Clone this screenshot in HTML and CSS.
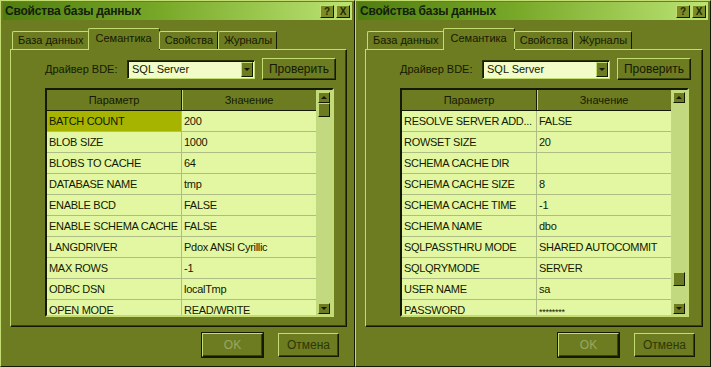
FILE: index.html
```html
<!DOCTYPE html>
<html lang="ru">
<head>
  <meta charset="UTF-8" />
  <title>Свойства базы данных</title>
  <link rel="stylesheet" href="styles.css">
</head>
<body>
  <div class="desktop">

    <!-- Left dialog -->
    <div class="window">
      <div class="titlebar">
        <span class="title">Свойства базы данных</span>
        <span class="cap-btn">?</span>
        <span class="cap-btn close">X</span>
      </div>

      <div class="tabs">
        <div class="tab">База данных</div>
        <div class="tab active">Семантика</div>
        <div class="tab">Свойства</div>
        <div class="tab">Журналы</div>
      </div>

      <div class="panel">
        <div class="driver-row">
          <span class="label">Драйвер BDE:</span>
          <div class="combo">
            <span class="combo-text">SQL Server</span>
            <span class="combo-btn"><span class="arrow-down"></span></span>
          </div>
          <button class="btn check-btn">Проверить</button>
        </div>

        <div class="grid">
          <table class="params">
            <tr><th>Параметр</th><th>Значение</th></tr>
            <tr><td class="selected">BATCH COUNT</td><td>200</td></tr>
            <tr><td>BLOB SIZE</td><td>1000</td></tr>
            <tr><td>BLOBS TO CACHE</td><td>64</td></tr>
            <tr><td>DATABASE NAME</td><td>tmp</td></tr>
            <tr><td>ENABLE BCD</td><td>FALSE</td></tr>
            <tr><td>ENABLE SCHEMA CACHE</td><td>FALSE</td></tr>
            <tr><td>LANGDRIVER</td><td>Pdox ANSI Cyrillic</td></tr>
            <tr><td>MAX ROWS</td><td>-1</td></tr>
            <tr><td>ODBC DSN</td><td>localTmp</td></tr>
            <tr><td>OPEN MODE</td><td>READ/WRITE</td></tr>
          </table>
          <div class="scrollbar">
            <span class="sb-btn"><span class="arrow-up"></span></span>
            <div class="sb-track">
              <span class="sb-thumb"></span>
            </div>
            <span class="sb-btn"><span class="arrow-down"></span></span>
          </div>
        </div>
      </div>

      <div class="footer">
        <button class="btn default">OK</button>
        <button class="btn">Отмена</button>
      </div>
    </div>

    <!-- Right dialog -->
    <div class="window">
      <div class="titlebar">
        <span class="title">Свойства базы данных</span>
        <span class="cap-btn">?</span>
        <span class="cap-btn close">X</span>
      </div>

      <div class="tabs">
        <div class="tab">База данных</div>
        <div class="tab active">Семантика</div>
        <div class="tab">Свойства</div>
        <div class="tab">Журналы</div>
      </div>

      <div class="panel">
        <div class="driver-row">
          <span class="label">Драйвер BDE:</span>
          <div class="combo">
            <span class="combo-text">SQL Server</span>
            <span class="combo-btn"><span class="arrow-down"></span></span>
          </div>
          <button class="btn check-btn">Проверить</button>
        </div>

        <div class="grid">
          <table class="params">
            <tr><th>Параметр</th><th>Значение</th></tr>
            <tr><td>RESOLVE SERVER ADD...</td><td>FALSE</td></tr>
            <tr><td>ROWSET SIZE</td><td>20</td></tr>
            <tr><td>SCHEMA CACHE DIR</td><td></td></tr>
            <tr><td>SCHEMA CACHE SIZE</td><td>8</td></tr>
            <tr><td>SCHEMA CACHE TIME</td><td>-1</td></tr>
            <tr><td>SCHEMA NAME</td><td>dbo</td></tr>
            <tr><td>SQLPASSTHRU MODE</td><td>SHARED AUTOCOMMIT</td></tr>
            <tr><td>SQLQRYMODE</td><td>SERVER</td></tr>
            <tr><td>USER NAME</td><td>sa</td></tr>
            <tr><td>PASSWORD</td><td><span class="masked">********</span></td></tr>
          </table>
          <div class="scrollbar">
            <span class="sb-btn"><span class="arrow-up"></span></span>
            <div class="sb-track end">
              <span class="sb-thumb"></span>
            </div>
            <span class="sb-btn"><span class="arrow-down"></span></span>
          </div>
        </div>
      </div>

      <div class="footer">
        <button class="btn default">OK</button>
        <button class="btn">Отмена</button>
      </div>
    </div>

  </div>
</body>
</html>
```

FILE: styles.css
```css
* {
  box-sizing: border-box;
}

body {
  margin: 0;
  padding: 0;
  background: #6d7c21;
  font-family: "Liberation Sans", Arial, sans-serif;
  font-size: 11px;
  color: #141a00;
}

.desktop {
  display: flex;
  width: 711px;
  height: 367px;
  overflow: hidden;
}

/* Window frame */
.window {
  width: 355px;
  height: 367px;
  padding: 1px 2px 2px 2px;
  border: 1px solid;
  border-color: #c4dc74 #141a00 #141a00 #c4dc74;
  background: #6d7c21;
  display: flex;
  flex-direction: column;
}

.window + .window {
  width: 356px;
}

.titlebar {
  height: 18px;
  display: flex;
  align-items: center;
  gap: 2px;
  padding: 0 2px 0 2px;
  background: linear-gradient(to right, #4f7d10, #78a828 45%, #bce474);
}

.title {
  flex: 1;
  font-weight: bold;
  font-size: 12px;
  letter-spacing: -0.2px;
  color: #13200a;
}

.cap-btn {
  width: 14px;
  height: 13px;
  background: #7b8b26;
  border: 1px solid;
  border-color: #c4dc74 #141a00 #141a00 #c4dc74;
  font-weight: bold;
  font-size: 10px;
  line-height: 11px;
  text-align: center;
  color: #1e2a04;
}

/* Tabs */
.tabs {
  display: flex;
  align-items: flex-end;
  height: 29px;
  padding-left: 9px;
  position: relative;
  z-index: 1;
}

.tab {
  height: 18px;
  padding: 2px 4px 0 5px;
  font-size: 11px;
  border: 1px solid #c4dc74;
  border-bottom: none;
  border-right: 1px solid #141a00;
  border-radius: 2px 2px 0 0;
  background: #6d7c21;
  white-space: nowrap;
}

.tab.active {
  height: 22px;
  margin: 0 -1px -1px -1px;
  padding: 3px 7px 0 7px;
}

/* Tab panel */
.panel {
  height: 278px;
  margin: 0 5px 0 7px;
  border: 1px solid;
  border-color: #c4dc74 #141a00 #141a00 #c4dc74;
  box-shadow: inset -1px -1px 0 #3a4410;
  padding: 8px 0 0 34px;
}

.driver-row {
  display: flex;
  align-items: center;
  height: 22px;
}

.label {
  width: 82px;
  font-size: 11px;
}

.combo {
  width: 128px;
  height: 19px;
  display: flex;
  align-items: center;
  background: #f1fcc8;
  border: 1px solid;
  border-color: #2a3206 #c4dc74 #c4dc74 #2a3206;
  box-shadow: inset 1px 1px 0 #141a00;
  padding: 0 1px 0 4px;
}

.combo-text {
  flex: 1;
  font-size: 11px;
}

.combo-btn {
  width: 12px;
  height: 15px;
  display: flex;
  align-items: center;
  justify-content: center;
  background: #6d7c21;
  border: 1px solid;
  border-color: #c4dc74 #141a00 #141a00 #c4dc74;
}

.arrow-down,
.arrow-up {
  width: 0;
  height: 0;
  border-left: 3px solid transparent;
  border-right: 3px solid transparent;
}

.arrow-down {
  border-top: 3px solid #141a00;
}

.arrow-up {
  border-bottom: 3px solid #141a00;
}

.btn {
  font-family: "Liberation Sans", Arial, sans-serif;
  font-size: 12px;
  color: #2c3806;
  background: #6d7c21;
  border: 1px solid;
  border-color: #c4dc74 #141a00 #141a00 #c4dc74;
  box-shadow: inset -1px -1px 0 #3a4410;
  padding: 0;
}

.driver-row .check-btn {
  width: 74px;
  height: 22px;
  margin-left: 7px;
  color: #141a00;
}

/* Parameter grid */
.grid {
  display: flex;
  width: 289px;
  height: 229px;
  margin-top: 8px;
  border: 2px solid;
  border-color: #141a00 #c4dc74 #c4dc74 #141a00;
  background: #e3f7a3;
  overflow: hidden;
}

.params {
  width: 271px;
  border-collapse: collapse;
  table-layout: fixed;
  align-self: flex-start;
}

.params th {
  height: 20px;
  padding: 0;
  font-weight: normal;
  font-size: 11px;
  background: #6d7c21;
  border-bottom: 1px solid #141a00;
  text-align: center;
}

.params th + th {
  border-left: 1px solid #141a00;
  box-shadow: inset 1px 0 0 #c4dc74;
}

.params td {
  height: 21px;
  padding: 0 0 0 2px;
  border-bottom: 1px solid #adbd84;
  white-space: nowrap;
  overflow: hidden;
  letter-spacing: -0.3px;
}

.params td + td {
  border-left: 1px solid #adbd84;
}

.params td.selected {
  background: #a6b400;
}

.masked {
  font-size: 9px;
  vertical-align: -2px;
}

.scrollbar {
  width: 16px;
  background: #c3d97f;
  display: flex;
  flex-direction: column;
  align-items: center;
  padding: 2px 0 1px;
}

.sb-btn,
.sb-thumb {
  width: 12px;
  height: 11px;
  display: flex;
  align-items: center;
  justify-content: center;
  background: #6d7c21;
  border: 1px solid;
  border-color: #c4dc74 #141a00 #141a00 #c4dc74;
}

.sb-thumb {
  height: 14px;
}

.sb-track {
  flex: 1;
  display: flex;
  flex-direction: column;
}

.sb-track.end {
  justify-content: flex-end;
  padding-bottom: 17px;
}

/* Dialog buttons */
.footer {
  display: flex;
  justify-content: flex-end;
  gap: 15px;
  padding: 6px 13px 0 0;
}

.footer .btn {
  width: 61px;
  height: 24px;
}

.footer .btn.default {
  color: #9aa862;
  outline: 1px solid #141a00;
}
```
